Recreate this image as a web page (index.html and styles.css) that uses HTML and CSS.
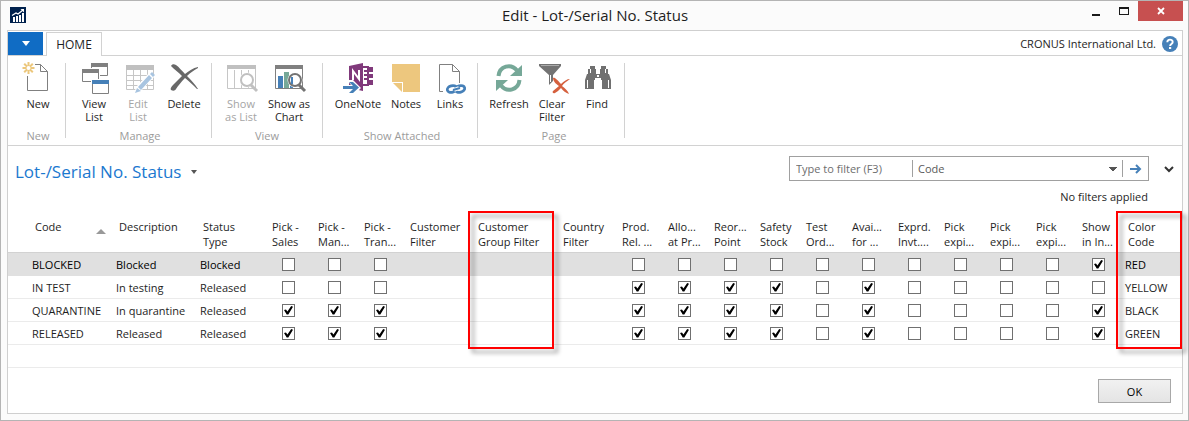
FILE: index.html
```html
<!DOCTYPE html>
<html lang="en">
<head>
<meta charset="utf-8">
<title>Edit - Lot-/Serial No. Status</title>
<link rel="stylesheet" href="styles.css">
</head>
<body>
<div class="window">
  <header class="titlebar">
    <svg class="app-icon" viewBox="0 0 16 16" aria-hidden="true"><path fill="#00214d" d="M0 0h16v16H0z"/><path fill="#fff" d="M3 10h2v5H3zM6 9h2v6H6zM9 8h2v7H9zM12 6h2v9h-2z"/><path d="M2 8.500L6 6l2 1 5-4" fill="none" stroke="#fff" stroke-width="1.200"/><path fill="#fff" d="M10.500 2H14v3.500z"/></svg>
    <h1 class="title">Edit - Lot-/Serial No. Status</h1>
    <div class="window-buttons">
      <button class="win-btn" aria-label="Minimize"><svg width="10" height="10" viewBox="0 0 10 10"><path d="M1 8h8v2H1z" fill="#1a1a1a"/></svg></button>
      <button class="win-btn" aria-label="Maximize"><svg width="10" height="10" viewBox="0 0 10 10"><path d="M0 1h10v8H0zM1 3v5h8V3z" fill="#1a1a1a" fill-rule="evenodd"/></svg></button>
      <button class="win-btn close" aria-label="Close"><svg width="8" height="8" viewBox="0 0 8 8"><path d="M1 1l6 6M7 1L1 7" stroke="#fff" stroke-width="1.800"/></svg></button>
    </div>
  </header>

  <main class="client">
    <nav class="tabs">
      <button class="file-menu" aria-label="Application menu"><svg width="8" height="5" viewBox="0 0 8 5"><path d="M0 0h8L4 5z" fill="#fff"/></svg></button>
      <button class="tab">HOME</button>
      <span class="company">CRONUS International Ltd.</span>
      <button class="help" aria-label="Help"><svg width="16" height="16" viewBox="0 0 16 16"><circle cx="8" cy="8" r="8" fill="#4680b8"/><path d="M5.300 6.200C5.300 2.800 10.700 2.900 10.700 6c0 2-2.600 2-2.600 4" fill="none" stroke="#fff" stroke-width="1.900"/><path d="M7 11h2.200v2H7z" fill="#fff"/></svg></button>
    </nav>

    <div class="ribbon">
      <section class="group group-new">
        <div class="actions">
          <button class="action"><svg class="icon" viewBox="0 0 32 32"><path d="M5.500 14v14.500h20v-19l-7-7H13M18.500 2.500v7h7" fill="none" stroke="#808080"/><path d="M6.500 0v12M.5 6h12M2.200 1.700l8.600 8.600M10.800 1.700l-8.600 8.600" stroke="#ecc77c" stroke-width="2"/><circle cx="6.500" cy="6" r="2" fill="#fff"/></svg><span>New</span></button>
        </div>
        <h2 class="group-name">New</h2>
      </section>
      <section class="group group-manage">
        <div class="actions">
          <button class="action"><svg class="icon" viewBox="0 0 32 32"><path d="M13.500 1.500h16v12h-16z" fill="#fff" stroke="#808080"/><path d="M13 1h17v4H13z" fill="#808080"/><path d="M3 6h19v16H3z" fill="#fff"/><path d="M4.500 7.500h16v12h-16z" fill="#fff" stroke="#808080"/><path d="M4 7h17v4H4z" fill="#808080"/><path d="M13 17h19v15H13z" fill="#fff"/><path d="M14.500 18.500h16v13h-16z" fill="#fff" stroke="#808080"/><path d="M14 18h17v4H14z" fill="#4680b8"/></svg><span>View<br>List</span></button>
          <button class="action" disabled><svg class="icon" viewBox="0 0 32 32"><path d="M4.500 3.500h27v24h-27zM11.500 8v20M18.500 8v20M25.500 8v20M5 13.500h26M5 18.500h26M5 23.500h26" fill="none" stroke="#c6c6c6"/><path d="M4 3h28v5H4z" fill="#c0c0c0"/><path d="M12 32l2-7L28 10l5 4-14 15z" fill="#fff"/><path d="M13 31l2-5 4 3zM16 25L27 13l3 3-11 12zM28 12l2-2 3 3-2 2z" fill="#a8c4e0"/></svg><span>Edit<br>List</span></button>
          <button class="action wide"><svg class="icon" viewBox="0 0 32 32"><path d="M3 4c1-2 3-2 5-1 3 2 6 6 9 9 4-3 8-6 13-7v1c-4 2-8 5-11 8 4 4 8 8 11 13h-1c-4-4-8-8-12-11-4 4-7 8-9 11-1 2-3 2-5 1-1-1 0-3 2-5 3-3 6-6 9-9C11 11 6 7 3 4z" fill="#686868"/></svg><span>Delete</span></button>
        </div>
        <h2 class="group-name">Manage</h2>
      </section>
      <section class="group group-view">
        <div class="actions">
          <button class="action" disabled><svg class="icon" viewBox="0 0 32 32"><path d="M2.500 3.500h28v23h-28zM9.500 8v19M16.500 8v19M23.500 8v19" fill="none" stroke="#c6c6c6"/><path d="M2 3h29v4H2z" fill="#c0c0c0"/><circle cx="22" cy="18" r="7.500" fill="#fff"/><circle cx="22" cy="18" r="6" fill="#fff" stroke="#c0c0c0" stroke-width="2"/><path d="M26 23l6 6" stroke="#c0c0c0" stroke-width="3"/></svg><span>Show<br>as List</span></button>
          <button class="action wider"><svg class="icon" viewBox="0 0 32 32"><path d="M2.500 3.500h27v23h-27z" fill="#fff" stroke="#808080"/><path d="M2 3h28v4H2z" fill="#808080"/><path d="M5 14h5v12H5z" fill="#4680b8"/><path d="M11 10h5v16h-5z" fill="#76a898"/><path d="M17 14h3v12h-3z" fill="#4680b8"/><circle cx="22" cy="18" r="7.500" fill="#fff"/><circle cx="22" cy="18" r="6" fill="#fff" stroke="#737373" stroke-width="2"/><path d="M18 15h2v7h-2z" fill="#4680b8"/><path d="M26 23l6 6" stroke="#737373" stroke-width="3"/></svg><span>Show as<br>Chart</span></button>
        </div>
        <h2 class="group-name">View</h2>
      </section>
      <section class="group group-attached">
        <div class="actions">
          <button class="action wider"><svg class="icon" viewBox="0 0 32 32"><path d="M20 5h6v18h-6z" fill="#fff" stroke="#80397b" stroke-width="2"/><path d="M22 9h3M22 13h3M22 17h3" stroke="#80397b" stroke-width="2"/><path d="M27 5h4v5h-4zM27 12h4v4h-4zM27 18h4v5h-4z" fill="#80397b"/><path d="M7 4l14-3v28L7 26z" fill="#80397b"/><path d="M11 18V9l6 8V8" fill="none" stroke="#fff" stroke-width="2"/><path d="M0 23h9l-4-5h6l8 8-7 7H4l5-5H0z" fill="#fff"/><path d="M1 24h10l-4-4h4l6 5.500-6 5.500H7l4-4H1z" fill="#4680b8"/></svg><span>OneNote</span></button>
          <button class="action"><svg class="icon" viewBox="0 0 32 32"><path d="M2 2h28v28H13V20H2z" fill="#edc77e"/><path d="M3 21h9v9z" fill="#edc77e"/></svg><span>Notes</span></button>
          <button class="action"><svg class="icon" viewBox="0 0 32 32"><path d="M9 29.500H5.500v-27h13l7 7V21M18.500 2.500v7h7" fill="none" stroke="#808080"/><ellipse cx="18" cy="27" rx="4.800" ry="3.200" fill="none" stroke="#4680b8" stroke-width="2.800" transform="rotate(-15 18 27)"/><ellipse cx="26" cy="27" rx="4.800" ry="3.200" fill="none" stroke="#4680b8" stroke-width="2.800" transform="rotate(-15 26 27)"/><path d="M20 28l5-2" stroke="#fff" stroke-width="4"/><path d="M19 28l7-2" stroke="#4680b8" stroke-width="2"/></svg><span>Links</span></button>
        </div>
        <h2 class="group-name">Show Attached</h2>
      </section>
      <section class="group group-page">
        <div class="actions">
          <button class="action"><svg class="icon" viewBox="0 0 32 32"><path d="M5.500 14C6.500 4 18 1 24 8.500" fill="none" stroke="#76a898" stroke-width="4"/><path d="M29 3v11H17z" fill="#76a898"/><path d="M26.500 18C25.500 28 14 31 8 23.500" fill="none" stroke="#76a898" stroke-width="4"/><path d="M3 29V18h12z" fill="#76a898"/></svg><span>Refresh</span></button>
          <button class="action narrow"><svg class="icon" viewBox="0 0 32 32"><path d="M3 2h22v2l-8 9v6l-4 4V13L3 4z" fill="#737373"/><path d="M5 3.500h18" stroke="#aaa"/><path d="M14.500 13v7" fill="none" stroke="#fff"/><path d="M17 16c1-1 3 0 8 6 3-3 6-5 9-5-4 3-6 4-8 7 3 2 6 5 7 8-3-1-6-3-8-6-2 2-4 4-6 5-2 1-3-1-2-2l6-5c-3-2-6-5-6-8z" fill="#d5603e"/></svg><span>Clear<br>Filter</span></button>
          <button class="action wide"><svg class="icon" viewBox="0 0 32 32"><path d="M9 4h5v3h1v5h4V7h1V4h5v3h2v5h1l2 6v9h-9v-9h-1v-2h-6v2h-1v9H4v-9l2-6h1V7h2z" fill="#707070"/><path d="M9.500 7v4M24.500 7v4M6.500 18v8M27.500 18v8" stroke="#fff" fill="none"/><path d="M16 13h2v2h-2z" fill="#fff"/></svg><span>Find</span></button>
        </div>
        <h2 class="group-name">Page</h2>
      </section>
    </div>

    <div class="page-head">
      <button class="page-title">Lot-/Serial No. Status <svg width="6" height="4" viewBox="0 0 6 4"><path d="M0 0h6L3 4z" fill="#555"/></svg></button>
      <div class="filter-area">
        <form class="filter">
          <input class="filter-text" type="text" placeholder="Type to filter (F3)" aria-label="Type to filter">
          <select class="filter-field" aria-label="Filter field"><option>Code</option></select>
          <button class="filter-go" type="button" aria-label="Apply filter"><svg width="12" height="10" viewBox="0 0 12 10"><path d="M0 5h10M6 1l4 4-4 4" fill="none" stroke="#4680b8" stroke-width="2"/></svg></button>
        </form>
        <p class="filter-status">No filters applied</p>
      </div>
      <button class="expand" aria-label="Expand filter pane"><svg width="10" height="7" viewBox="0 0 10 7"><path d="M1 1l4 4 4-4" fill="none" stroke="#333" stroke-width="2"/></svg></button>
    </div>

    <table class="grid">
      <colgroup><col class="c-gutter"><col class="c-text"><col class="c-text"><col class="c-status"><col class="c-check" span="3"><col class="c-customer"><col class="c-group"><col class="c-country"><col class="c-check" span="11"><col></colgroup>
      <thead>
        <tr>
          <th></th>
          <th class="sorted">Code <svg width="10" height="5" viewBox="0 0 10 5"><path d="M0 5h10L5 0z" fill="#999"/></svg></th>
          <th>Description</th><th>Status<br>Type</th><th>Pick -<br>Sales</th><th>Pick -<br>Man...</th><th>Pick -<br>Tran...</th><th>Customer<br>Filter</th>
          <th class="marked">Customer<br>Group Filter<span class="marker"></span></th>
          <th>Country<br>Filter</th><th>Prod.<br>Rel. ...</th><th>Allo...<br>at Pr...</th><th>Reor...<br>Point</th><th>Safety<br>Stock</th><th>Test<br>Ord...</th><th>Avai...<br>for ...</th><th>Exprd.<br>Invt....</th><th>Pick<br>expi...</th><th>Pick<br>expi...</th><th>Pick<br>expi...</th><th>Show<br>in In...</th>
          <th class="marked">Color<br>Code<span class="marker marker-last"></span></th>
        </tr>
      </thead>
      <tbody id="rows"></tbody>
    </table>

    <footer class="footer"><button class="ok">OK</button></footer>
  </main>
</div>
<script src="rows.js"></script>
</body>
</html>
```
FILE: rows.js
```js
const pickLabels = ["Pick - Sales", "Pick - Man...", "Pick - Tran..."];
const flagLabels = ["Prod. Rel.", "Allo... at Pr...", "Reor... Point", "Safety Stock", "Test Ord...",
  "Avai... for ...", "Exprd. Invt.", "Pick expi... 1", "Pick expi... 2", "Pick expi... 3", "Show in In..."];

const records = [
  { code: "BLOCKED", description: "Blocked", status: "Blocked", picks: "000", flags: "00000000001", color: "RED" },
  { code: "IN TEST", description: "In testing", status: "Released", picks: "000", flags: "11110100000", color: "YELLOW" },
  { code: "QUARANTINE", description: "In quarantine", status: "Released", picks: "111", flags: "11110100001", color: "BLACK" },
  { code: "RELEASED", description: "Released", status: "Released", picks: "111", flags: "11110100001", color: "GREEN" }
];

const checks = (bits, labels, code) => [...bits].map((bit, i) =>
  `<td class="check"><input type="checkbox" aria-label="${code}: ${labels[i]}"${bit === "1" ? " checked" : ""}></td>`).join("");

document.getElementById("rows").innerHTML = records.map((r, i) =>
  `<tr${i === 0 ? ' class="selected"' : ""}><td></td><td>${r.code}</td><td>${r.description}</td><td>${r.status}</td>` +
  checks(r.picks, pickLabels, r.code) + "<td></td><td></td><td></td>" +
  checks(r.flags, flagLabels, r.code) + `<td>${r.color}</td></tr>`).join("") +
  `<tr>${"<td></td>".repeat(22)}</tr>`;
```
FILE: styles.css
```css
* { box-sizing: border-box; }

body {
  margin: 0;
  font: 11px/13px "Open Sans", "Noto Sans", sans-serif;
  color: #1e1e1e;
}

button, input, select {
  font: inherit;
  color: inherit;
  margin: 0;
  padding: 0;
  border: 0;
  border-radius: 0;
  background: none;
}

h1, h2, p { margin: 0; font-weight: 400; }
svg { display: block; overflow: visible; }

.window {
  display: flex;
  flex-direction: column;
  min-height: 100vh;
  padding: 0 5px 6px 6px;
  border: 1px solid #b4b4b4;
  background: #fbfbfb;
}

.titlebar {
  display: grid;
  grid-template-columns: 1fr auto 1fr;
  height: 29px;
}
.app-icon { width: 16px; height: 16px; margin: 6px 0 0 3px; }
.title { font-size: 15px; line-height: 29px; }
.window-buttons { display: flex; justify-content: flex-end; height: 20px; }
.win-btn { display: flex; align-items: center; justify-content: center; width: 28px; }
.win-btn.close { width: 45px; background: #c75050; }

.client {
  display: flex;
  flex-direction: column;
  flex: 1;
  border: 1px solid #cfcfcf;
  background: #fff;
}

.tabs {
  display: flex;
  align-items: center;
  height: 25px;
  padding-top: 1px;
  border-bottom: 1px solid #d2d2d2;
}
.file-menu {
  display: flex;
  align-items: center;
  justify-content: center;
  width: 35px;
  height: 23px;
  background: #106cc4;
}
.tab {
  align-self: flex-end;
  width: 56px;
  height: 24px;
  margin: 0 0 -1px 3px;
  border: 1px solid #d2d2d2;
  border-bottom: 0;
  background: #fff;
  font-size: 12px;
}
.company { margin-left: auto; }
.help { margin: 0 4px 0 6px; }

.ribbon {
  display: flex;
  height: 90px;
  padding: 7px 0 3px;
  border-bottom: 1px solid #d2d2d2;
}
.group {
  display: flex;
  flex-direction: column;
  justify-content: space-between;
  background: linear-gradient(#d2d2d2, #d2d2d2) right top / 1px 75px no-repeat;
}
.group-new { padding: 0 6px 0 8px; }
.group-manage { padding: 0 4px 0 6px; }
.group-view { padding: 0 8px 0 7px; }
.group-attached { padding: 0 6px 0 9px; }
.group-page { padding: 0 4px 0 9px; }
.group-name { font-size: 11px; line-height: 13px; text-align: center; color: #9b9b9b; }
.actions { display: flex; margin-top: -1px; }
.action {
  display: flex;
  flex-direction: column;
  align-items: center;
  gap: 3px;
  width: 44px;
  white-space: nowrap;
}
.action.narrow { width: 42px; }
.action.wide { width: 48px; }
.action.wider { width: 52px; }
.action:disabled { color: #a5a5a5; }
.icon { width: 32px; height: 32px; flex: none; }

.page-head {
  display: flex;
  align-items: flex-start;
  padding: 10px 8px 0 7px;
}
.page-title {
  display: flex;
  align-items: center;
  gap: 10px;
  margin-right: auto;
  font-size: 17px;
  line-height: 31px;
  color: #1b78cf;
}
.filter-area { flex: 0 1 360px; }
.filter {
  display: flex;
  height: 25px;
  padding: 3px 0;
  border: 1px solid #a0a0a0;
  color: #5a5a5a;
}
.filter-text { width: 122px; padding-left: 6px; }
.filter-text::placeholder { color: #6e6e6e; opacity: 1; }
.filter-field {
  flex: 1;
  padding-left: 5px;
  border: solid #a0a0a0;
  border-width: 0 1px;
  appearance: none;
  background: linear-gradient(to bottom right, #555 50%, transparent 51%) right 5px center / 4px 4px no-repeat,
    linear-gradient(to bottom left, #555 50%, transparent 51%) right 9px center / 4px 4px no-repeat;
}
.filter-go { display: flex; align-items: center; justify-content: center; width: 25px; }
.filter-status { margin-top: 9px; padding-right: 1px; text-align: right; }
.expand { margin: 10px 0 0 15px; }

.grid {
  width: 100%;
  margin-top: 14px;
  border-collapse: separate;
  border-spacing: 0;
  table-layout: fixed;
}
.c-gutter { width: 21px; }
.c-text { width: 84px; }
.c-status { width: 69px; }
.c-check { width: 46px; }
.c-customer { width: 68px; }
.c-group { width: 85px; }
.c-country { width: 59px; }

.grid th {
  height: 36px;
  padding: 2px 0 0 6px;
  border-bottom: 1px solid #d2d2d2;
  font-weight: 400;
  line-height: 15px;
  text-align: left;
  vertical-align: top;
  white-space: nowrap;
}
.grid td {
  height: 23px;
  padding: 0 0 0 3px;
  border-bottom: 1px solid #ebebeb;
  line-height: 15px;
  white-space: nowrap;
}
.grid .selected td { background: #e0e0e0; border-color: #e0e0e0; color: #000; }
.grid .check { padding: 0 1px 0 0; }
.sorted svg { float: right; margin: 10px 7px 0 0; }

.check input {
  display: block;
  width: 13px;
  height: 13px;
  margin: 1px auto 0;
  border: 1px solid #707070;
  background: #fff;
  appearance: none;
}
.check input:checked::before {
  content: "";
  display: block;
  width: 9px;
  height: 9px;
  margin: 1px;
  background: #000;
  clip-path: polygon(0 45%, 22% 40%, 38% 62%, 80% 0, 100% 8%, 48% 95%, 30% 95%);
}

.marked { position: relative; }
.marker {
  position: absolute;
  z-index: 1;
  top: -6px;
  left: -4px;
  right: 3px;
  height: 138px;
  border: 2px solid #f00;
  filter: drop-shadow(4px 4px 2px rgba(0, 0, 0, .4));
  pointer-events: none;
}
.marker-last { left: -6px; right: 0; }

.footer { display: flex; justify-content: flex-end; padding: 11px 11px 9px; }
.ok {
  width: 73px;
  height: 24px;
  border: 1px solid #a8a8a8;
  background: linear-gradient(#f1f1f1, #e4e4e4);
  color: #000;
}
```
